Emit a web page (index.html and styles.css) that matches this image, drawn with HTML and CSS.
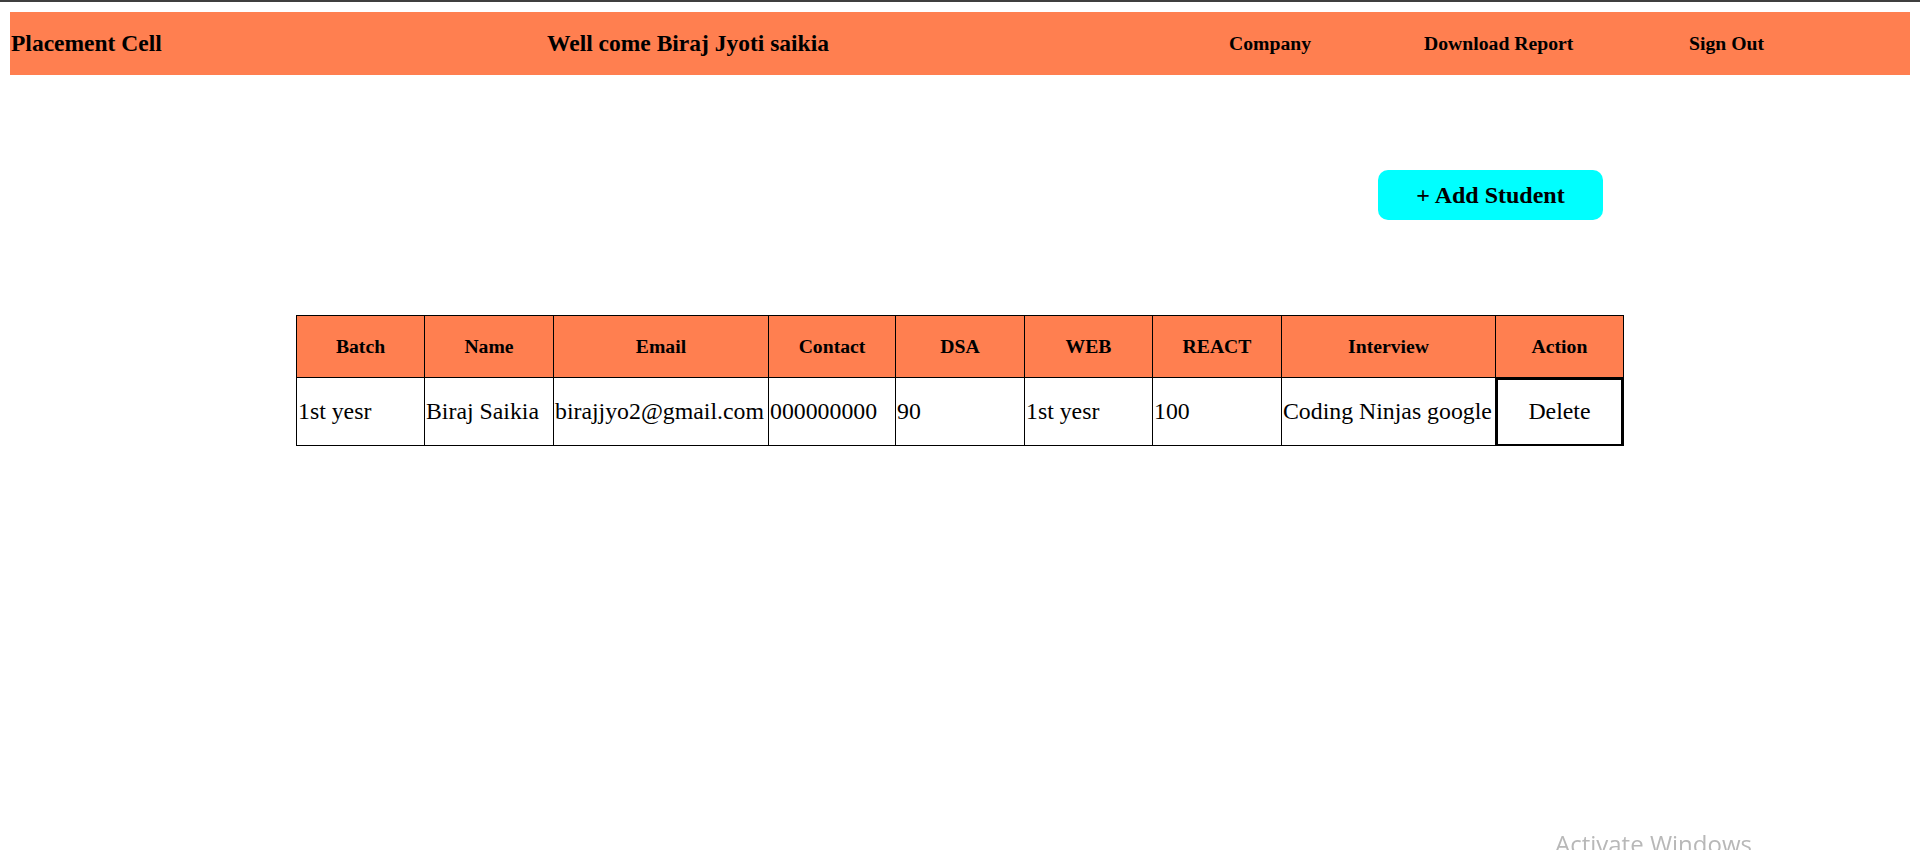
FILE: index.html
```html
<!DOCTYPE html>
<html lang="en">
<head>
<meta charset="utf-8">
<title>Placement Cell</title>
<link rel="stylesheet" href="styles.css">
</head>
<body>
<div class="topline"></div>
<header class="navbar">
  <div class="brand">Placement Cell</div>
  <div class="welcome">Well come Biraj Jyoti saikia</div>
  <a class="nav-link nav-company" href="#">Company</a>
  <a class="nav-link nav-download" href="#">Download Report</a>
  <a class="nav-link nav-signout" href="#">Sign Out</a>
</header>
<main class="content">
  <div class="actions">
    <button class="add-btn">+ Add Student</button>
  </div>
  <table class="students">
    <colgroup>
      <col class="c-batch"><col class="c-name"><col class="c-email"><col class="c-contact"><col class="c-dsa"><col class="c-web"><col class="c-react"><col class="c-interview"><col class="c-action">
    </colgroup>
    <thead>
      <tr>
        <th>Batch</th><th>Name</th><th>Email</th><th>Contact</th><th>DSA</th><th>WEB</th><th>REACT</th><th>Interview</th><th>Action</th>
      </tr>
    </thead>
    <tbody>
      <tr>
        <td>1st yesr</td><td>Biraj Saikia</td><td>birajjyo2@gmail.com</td><td>000000000</td><td>90</td><td>1st yesr</td><td>100</td><td>Coding Ninjas google</td><td class="action-cell"><button class="delete-btn">Delete</button></td>
      </tr>
    </tbody>
  </table>
</main>
<div class="watermark">Activate Windows</div>
</body>
</html>
```
FILE: styles.css
```css
html, body {
  margin: 0;
  padding: 0;
  background: #ffffff;
}
body {
  font-family: "Liberation Serif", "Times New Roman", serif;
  color: #000;
  min-height: 850px;
}
.topline {
  height: 2px;
  background: #3f3f3f;
}
.navbar {
  margin: 10px 10px 0 10px;
  height: 63px;
  background: #ff7f50;
  display: flex;
  align-items: center;
}
.brand {
  width: 537px;
  font-size: 23.5px;
  font-weight: bold;
  padding-left: 1px;
  box-sizing: border-box;
}
.welcome {
  width: 682px;
  font-size: 23.5px;
  font-weight: bold;
}
.nav-link {
  color: #000;
  text-decoration: none;
  font-size: 19.7px;
  font-weight: bold;
}
.nav-company { width: 195px; }
.nav-download { width: 265px; }
.nav-signout { width: 100px; }

.content {
  padding-top: 95px;
}
.actions {
  display: flex;
  justify-content: flex-end;
  padding-right: 317px;
}
.add-btn {
  width: 225px;
  height: 50px;
  border: none;
  border-radius: 10px;
  background: #00ffff;
  font-family: "Liberation Serif", "Times New Roman", serif;
  font-size: 24px;
  font-weight: bold;
  color: #000;
  padding: 0;
}
.students {
  margin: 95px auto 0 auto;
  width: 1327px;
  table-layout: fixed;
  border-collapse: collapse;
}
.c-batch { width: 128px; }
.c-name { width: 129px; }
.c-email { width: 215px; }
.c-contact { width: 127px; }
.c-dsa { width: 129px; }
.c-web { width: 128px; }
.c-react { width: 129px; }
.c-interview { width: 214px; }
.c-action { width: 128px; }
.students th {
  background: #ff7f50;
  border: 1px solid #000;
  height: 61px;
  padding: 0;
  font-size: 19.7px;
  font-weight: bold;
  text-align: center;
}
.students td {
  border: 1px solid #000;
  height: 67px;
  padding: 0 1px;
  font-size: 23.8px;
  text-align: left;
  white-space: nowrap;
}
.students td.action-cell {
  padding: 0;
}
.delete-btn {
  display: block;
  width: 100%;
  height: 68px;
  margin: -1px 0;
  border: 2px solid #000;
  background: #fff;
  font-family: "Liberation Serif", "Times New Roman", serif;
  font-size: 23.8px;
  color: #000;
  padding: 0;
}
.watermark {
  position: fixed;
  left: 1555px;
  top: 832px;
  font-family: "Open Sans", "Noto Sans", sans-serif;
  font-size: 24px;
  line-height: 24px;
  color: #b8b8b8;
  white-space: nowrap;
}
```
